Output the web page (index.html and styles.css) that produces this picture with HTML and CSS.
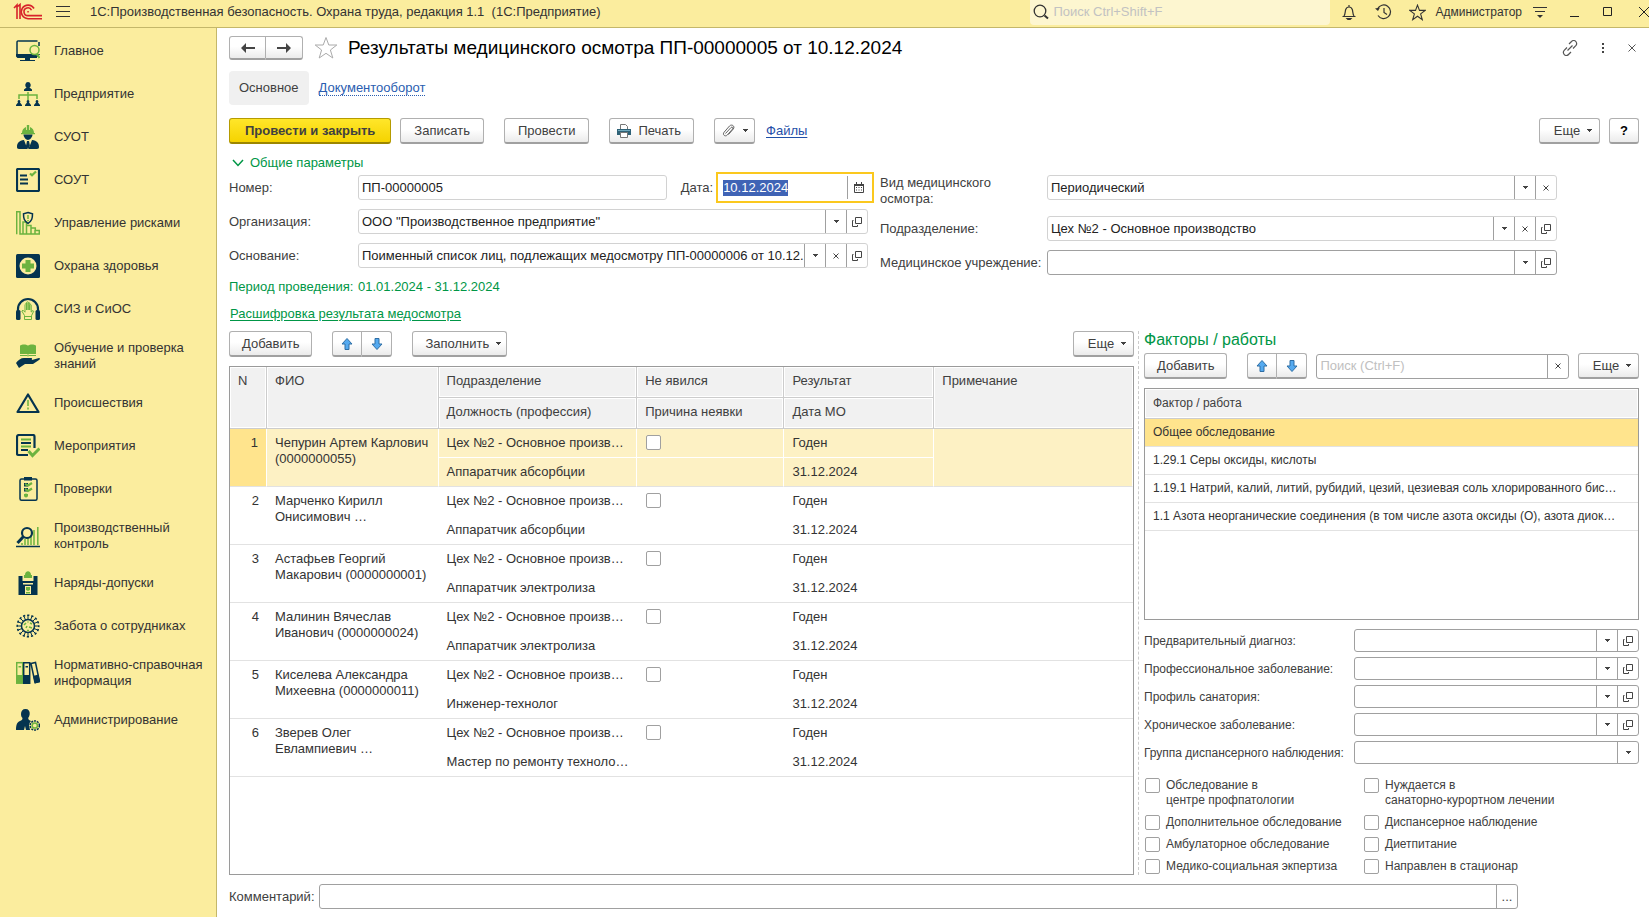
FILE: index.html
```html
<!DOCTYPE html>
<html lang="ru">
<head>
<meta charset="utf-8">
<title>Результаты медицинского осмотра</title>
<link rel="stylesheet" href="styles.css">
</head>
<body>
<svg class="sprite" aria-hidden="true">
  <symbol id="drop" viewBox="0 0 5 3"><path d="M0 0h5v1H4v1H3v1H2V2H1V1H0z" fill="currentColor"/></symbol>
  <symbol id="open" viewBox="0 0 10 10"><path d="M3.500.5h6v6h-6zM1.500 3.500h-1v6h5v-1.500" fill="none" stroke="currentColor"/></symbol>
  <symbol id="cross" viewBox="0 0 6 6"><path d="M.5.5l5 5M5.500.5l-5 5" fill="none" stroke="currentColor"/></symbol>
  <symbol id="up" viewBox="0 0 12 12"><path d="M6 .5L11 6H8v5.500H4V6H1z" fill="#55aaf0" stroke="#2f6ea5"/></symbol>
  <symbol id="down" viewBox="0 0 12 12"><path d="M6 11.500L1 6h3V.5h4V6h3z" fill="#55aaf0" stroke="#2f6ea5"/></symbol>
  <symbol id="star" viewBox="0 0 24 24"><path d="M12 1.500l2.800 7.500h8l-6.400 5 2.400 8L12 17.300 5.200 22l2.400-8-6.400-5h8z" fill="none" stroke="currentColor"/></symbol>
</svg>

<header class="titlebar">
  <svg class="logo" viewBox="0 0 30 18" fill="none" stroke="#d8232a" stroke-width="1.600"><path d="M1 5l3-3v14M3.500 4.500L7 1.500V16"/><path d="M21 5.500A6.800 6.800 0 1 0 15 15.700H29"/><path d="M18.500 7.200A3.900 3.900 0 1 0 15 12.600H29"/><path d="M15.800 8.700h-1.500"/></svg>
  <button class="bare" aria-label="Меню"><svg width="16" height="14" viewBox="0 0 16 14" stroke="#333"><path d="M1 1.500h14M1 6.500h14M1 11.500h14"/></svg></button>
  <span class="app-name">1С:Производственная безопасность. Охрана труда, редакция 1.1&nbsp; (1С:Предприятие)</span>
  <label class="global-search">
    <svg width="16" height="16" viewBox="0 0 16 16" fill="none" stroke="#333"><circle cx="7" cy="7" r="5.800" stroke-width="1.300"/><path d="M11.500 11.500l3.500 3" stroke-width="2"/></svg>
    <input type="text" placeholder="Поиск Ctrl+Shift+F" aria-label="Поиск">
  </label>
  <div class="title-tools">
    <button class="bare" aria-label="Уведомления"><svg width="16" height="16" viewBox="0 0 16 16" fill="none" stroke="#333" stroke-width="1.200"><path d="M1.500 12.500h13M3 12c1.500-2 1-4.500 1.700-6.500C5.300 3.700 6.500 3 8 3s2.700.7 3.300 2.500C12 7.500 11.500 10 13 12M8 3V1"/><path d="M6 14.500h4l-1 1H7z" fill="#333"/></svg></button>
    <button class="bare" aria-label="История"><svg width="17" height="16" viewBox="0 0 17 16" fill="none" stroke="#333" stroke-width="1.200"><path d="M2.500 5A6.800 6.800 0 1 1 3 11.500M9 4v4.500l3 2"/><path d="M0 4.500l3 2.500 2-3.500z" fill="#333" stroke="none"/></svg></button>
    <button class="bare" aria-label="Избранное"><svg width="17" height="17"><use href="#star" stroke-width="1.500"/></svg></button>
    <span class="user">Администратор</span>
    <button class="bare" aria-label="Настройки"><svg width="14" height="13" viewBox="0 0 14 13" stroke="#333"><path d="M0 1.500h14M2 5.500h10"/><path d="M4 9h6l-3 3z" fill="#333" stroke="none"/></svg></button>
    <button class="bare win" aria-label="Свернуть"><svg width="10" height="10" viewBox="0 0 10 10"><path d="M1 9.500h9" stroke="#222"/></svg></button>
    <button class="bare win" aria-label="Развернуть"><svg width="10" height="10" viewBox="0 0 10 10"><path d="M.5.5h8v8h-8z" stroke="#222" fill="none"/></svg></button>
    <button class="bare win" aria-label="Закрыть"><svg width="10" height="10" viewBox="0 0 10 10"><path d="M0 0l10 10M10 0L0 10" stroke="#222"/></svg></button>
  </div>
</header>

<div class="body">
<nav class="sidebar">
  <a href="#"><svg viewBox="0 0 24 24"><path class="sn" d="M3 2h18.500M23 3v4M23 15v1M1 16V3.500A1.500 1.500 0 0 1 3 2M1 17h22" /><path class="n" d="M0 15h17l4 2v2H1.500L0 17.500zM9 19h5v2h5v1H4v-1h5z"/><circle class="sg" cx="18.500" cy="11" r="4.500"/><path class="sg w2" d="M21 15l2.500 4"/></svg>Главное</a>
  <a href="#"><svg viewBox="0 0 24 24"><path class="n" d="M12 0a2.800 3 0 0 1 1.500 5.500L16 7.500V9H8V7.500l2.500-2A2.800 3 0 0 1 12 0z"/><path class="sg" d="M12 10v8M3 17v-4h18v4"/><path class="n" d="M3 18a1.500 1.500 0 0 1 1 2.500L6 23v1H0v-1l2-2.500A1.500 1.500 0 0 1 3 18zM12 18a1.500 1.500 0 0 1 1 2.500l2 2.500v1H9v-1l2-2.500A1.500 1.500 0 0 1 12 18zM21 18a1.500 1.500 0 0 1 1 2.500l2 2.500v1h-6v-1l2-2.500a1.500 1.500 0 0 1 1-2.500z"/></svg>Предприятие</a>
  <a href="#"><svg viewBox="0 0 24 24"><path class="g" d="M6 8c0-3 1.500-5 4-6V5h.8V0h2.400v5h.8V2c2.500 1 4 3 4 6h1v1.200H5V8z"/><path class="n" d="M7.500 9.500h9C16.500 12 14 15 12 15s-4.500-3-4.500-5.500zM8 15l3.500 9H3c-1.500 0-2-1-2-2 0-4 2-6.500 7-7zM16 15l-3.500 9H21c1.500 0 2-1 2-2 0-4-2-6.500-7-7zM11 16h2l1 5-2 3-2-3z"/></svg>СУОТ</a>
  <a href="#"><svg viewBox="0 0 24 24"><rect class="sn w2" x="1" y="1" width="22" height="22" rx="1"/><path class="sn w2" d="M4 7.500h7M4 11.500h8M4 15.500h8"/><path class="sg w2" d="M14 5.500l2 1.800L20 3.500"/></svg>СОУТ</a>
  <a href="#"><svg viewBox="0 0 24 24"><path class="sg" d="M.7 23.300V.7H4v22.600M4 5v18h19.300v-3.500h-4V17H15v-2.500h-4.500V11H7v12M10.500 14v9M15 17v6M19 19v4"/><path class="sn" fill="#fbed9e" d="M12 1.500l4.500 1.300c0 4.500-.5 7-4.500 9.700-4-2.700-4.500-5.200-4.500-9.700z"/><path class="sg" d="M12 4v4M12 9v1.200"/></svg>Управление рисками</a>
  <a href="#"><svg viewBox="0 0 24 24"><rect class="n" width="24" height="24" rx="1.500"/><circle cx="12" cy="12" r="8.500" fill="#fbed9e"/><path class="g" d="M9.500 6h5v3.500H18v5h-3.500V18h-5v-3.500H6v-5h3.500z"/></svg>Охрана здоровья</a>
  <a href="#"><svg viewBox="0 0 24 24"><path class="sn w2" d="M2 14v-2a10 10 0 0 1 20 0v2"/><rect class="n" y="13" width="4.500" height="10" rx="1.500"/><rect class="n" x="19.500" y="13" width="4.500" height="10" rx="1.500"/><path class="sg thin" d="M8.500 22.500v-4L5.800 14l1.200-.8 2 2V7.500q.8-1.500 1.500 0V13 5.500q.8-1.500 1.600 0V13 6q.8-1.500 1.600 0v7V8q.8-1.500 1.500 0v7l1.800-1.500.7.7-2.200 4.500v3.800zM8.500 19.500h7"/></svg>СИЗ и СиОС</a>
  <a href="#"><svg viewBox="0 0 24 24"><path class="g" d="M4 1.500C6 0 10 0 12 1.500 14 0 18 0 20 1.500V10h-7q-1 1-2 0H4z"/><path class="sg thin" d="M4 11.500h7q1 1 2 0h7"/><path class="n" d="M0 19c2-3 5-5 8-5h7c1.500 0 1.500 2 0 2h-4 5l7-2c1.500 0 1 1.500 0 2l-6 4H9l-6 4z"/></svg>Обучение и проверка<br>знаний</a>
  <a href="#"><svg viewBox="0 0 24 24"><path class="sn w2" stroke-linejoin="round" d="M12 3.500L22.500 21h-21z"/><path class="sg" d="M12 9v6M12 16.500v2"/></svg>Происшествия</a>
  <a href="#"><svg viewBox="0 0 24 24"><path class="sn w2" d="M12 21H2.500Q1 21 1 19.500V3Q1 1 3 1h14q1.500 0 1.500 1.500V14"/><path class="sg w2" d="M5 5.500h10M5 12.500h10"/><path class="sn w2" d="M5 9h10M5 16h7"/><path class="sg w3" d="M12.500 17l4 4.500 7-7"/></svg>Мероприятия</a>
  <a href="#"><svg viewBox="0 0 24 24"><rect class="sn" x="4" y="2" width="17" height="21.200" rx="1.500"/><path class="n" d="M8 0h8v3.500H8zM8 6h4v3.500H8zM8 11h4v3.500H8z"/><path class="sg w2" d="M9 7l3 1.500L16 6M9 12l3 2 4-2.500M8 18h4"/><circle class="g" cx="10" cy="18.500" r="2"/></svg>Проверки</a>
  <a href="#"><svg viewBox="0 0 24 24"><path class="sg" d="M6 19v2M9 15v6M12 14v7M15 11v10M18 6v15M21.800 3v18"/><path class="sn" d="M0 22.500h24"/><circle class="sn w2" cx="11" cy="9" r="5"/><path class="sn w3" d="M7.500 12.500L1.500 19"/></svg>Производственный<br>контроль</a>
  <a href="#"><svg viewBox="0 0 24 24"><path class="n" d="M2.500 5h4v5h11V5h4v19h-19z"/><path class="g" d="M8 7V4h1c0-5 6-5 6 0h1v3z"/><path d="M7 12h10v1.500H7zM9 15h6v8H9z" fill="#fbed9e"/><path class="g" d="M10 16h4v3l-2 1-2-1zM10 21h4v1.500h-4z"/></svg>Наряды-допуски</a>
  <a href="#"><svg viewBox="0 0 24 24"><circle class="sn" cx="12" cy="12" r="6.500"/><path class="sn thin" d="M12 5.500V1M12 18.500V23M5.500 12H1M18.500 12H23M7.400 7.400L4.200 4.200M16.600 16.600l3.200 3.200M7.400 16.600l-3.200 3.200M16.600 7.400l3.200-3.200M9.500 6L7.800 1.900M14.500 18l1.700 4.100M6 14.500l-4.100 1.700M18 9.500l4.100-1.700M6 9.500L1.900 7.800M18 14.500l4.100 1.700M9.500 18l-1.700 4.100M14.500 6l1.700-4.100"/><circle class="sn" cx="12" cy="12" r="10.800" stroke-width="2" stroke-dasharray="2.240 2" stroke-dashoffset="1.120"/><path class="sg" d="M8 11l2-2M10 14l1-2M14 9l2 1M13 13l3 1M11 16.500h2M12 7.500v1"/></svg>Забота о сотрудниках</a>
  <a href="#"><svg viewBox="0 0 24 24"><rect class="sg" x=".7" y="1.700" width="6" height="20.500"/><path class="g" d="M1 14h6v8H1zM2.500 5h2.600v1.500H2.500z"/><path class="sn" d="M7.700 1.700h6v20.500h-6zM15 2.500l4.500-1 4 19-4.500 1z"/><path class="n" d="M7.700 14h6v8h-6zM17 15l5.500-1.500L24 21l-5 1.500zM9.500 5h2.500v1.500H9.500z"/></svg>Нормативно-справочная<br>информация</a>
  <a href="#"><svg viewBox="0 0 24 24"><path class="n" d="M9.500 1c3 0 4.500 2 4.200 5-.2 2-1 3-1.500 4 0 2 1.500 2 2.800 3-1.500 1.500-2.500 4-1.500 6.500L14 22h-4l-1-4-1 4H0c0-5 1-8 4-9 1.500-.7 2.500-1 2.500-3C5.500 9 5 8 5 6c0-3 1.500-5 4.500-5z"/><circle class="sn" cx="18.800" cy="17.500" r="4.600" stroke-dasharray="2 .9"/><circle class="sg" cx="18.800" cy="17.500" r="2.600"/></svg>Администрирование</a>
</nav>

<main class="form">
  <div class="head">
    <div class="pair">
      <button class="btn" aria-label="Назад"><svg width="14" height="10" viewBox="0 0 14 10"><path d="M0 5l5-5v4h9v2H5v4z" fill="#444"/></svg></button>
      <button class="btn" aria-label="Вперед"><svg width="14" height="10" viewBox="0 0 14 10"><path d="M14 5L9 0v4H0v2h9v4z" fill="#444"/></svg></button>
    </div>
    <svg class="fav" width="24" height="24"><use href="#star"/></svg>
    <h1>Результаты медицинского осмотра ПП-00000005 от 10.12.2024</h1>
    <button class="bare" aria-label="Ссылка"><svg width="16" height="16" viewBox="0 0 16 16" fill="none" stroke="#555" stroke-width="1.200"><path d="M7 4l2.500-2.500a2.800 2.800 0 0 1 4.500.3c1 1.500.8 2.800-.2 3.900l-2.800 2.800M9 12l-2.500 2.500a2.800 2.800 0 0 1-4.500-.3c-1-1.500-.8-2.800.2-3.900L5 7.500M5.500 10.500l5-5"/></svg></button>
    <button class="bare" aria-label="Ещё"><svg width="2" height="12" viewBox="0 0 2 12" fill="#444"><path d="M0 1h2v2H0zM0 5h2v2H0zM0 9h2v2H0z"/></svg></button>
    <button class="bare" aria-label="Закрыть форму"><svg width="8" height="8" viewBox="0 0 8 8" stroke="#555"><path d="M.5.5l7 7M7.500.5l-7 7"/></svg></button>
  </div>

  <div class="tabs"><button class="tab">Основное</button><a class="doc-link" href="#">Документооборот</a></div>

  <div class="bar commands">
    <button class="btn primary">Провести и закрыть</button>
    <button class="btn">Записать</button>
    <button class="btn gap-l">Провести</button>
    <button class="btn gap-l icon-text"><svg width="14" height="14" viewBox="0 0 14 14"><path d="M3.500 5V.5h5l2 2V5" fill="#fff" stroke="#777"/><path d="M0 5h14v6H0z" fill="#2f6277"/><path d="M1 6h12v1H1z" fill="#6fa9bd"/><path d="M3.500 8.500h7v5h-7z" fill="#fff" stroke="#777"/></svg>Печать</button>
    <button class="btn gap-l icon-drop" aria-label="Вложения"><svg width="13" height="13" viewBox="0 0 13 13" fill="none" stroke="#666"><path d="M3.500 9.500l5.500-6c1.200-1.200 2.700.2 1.600 1.500l-5.300 6c-2 2.200-5.300-.3-3.200-2.800L7.500 2C9.500-.2 13.500 2 11.300 5L6.500 10.500"/></svg><svg class="i-drop"><use href="#drop"/></svg></button>
    <a class="files" href="#">Файлы</a>
    <button class="btn drop push">Еще<svg class="i-drop"><use href="#drop"/></svg></button>
    <button class="btn help">?</button>
  </div>

  <div class="group-title"><svg width="12" height="8" viewBox="0 0 12 8" fill="none" stroke="#009646" stroke-width="1.500"><path d="M1 1l5 5.500L11 1"/></svg>Общие параметры</div>

  <div class="params">
    <div class="col left">
      <label for="num">Номер:</label>
      <div class="num-date">
        <div class="field num"><input id="num" type="text" value="ПП-00000005"></div>
        <label for="date">Дата:</label>
        <div class="field date"><input id="date" type="text" value="10.12.2024"><button aria-label="Календарь"><svg width="10" height="11" viewBox="0 0 10 11"><path d="M.5 2.500h9v8h-9z" fill="#fff" stroke="#444"/><path d="M0 2h10v2H0zM2 0h1v2H2zM7 0h1v2H7zM2 5h1v1H2zM4.500 5h1v1h-1zM7 5h1v1H7zM2 7.500h1v1H2zM4.500 7.500h1v1h-1zM7 7.500h1v1H7z" fill="#444"/></svg></button></div>
      </div>
      <label for="org">Организация:</label>
      <div class="field"><input id="org" type="text" value='ООО "Производственное предприятие"'><button aria-label="Выбрать"><svg class="i-drop"><use href="#drop"/></svg></button><button aria-label="Открыть"><svg class="i-open"><use href="#open"/></svg></button></div>
      <label for="base">Основание:</label>
      <div class="field"><input id="base" type="text" value="Поименный список лиц, подлежащих медосмотру ПП-00000006 от 10.12."><button aria-label="Выбрать"><svg class="i-drop"><use href="#drop"/></svg></button><button aria-label="Очистить"><svg class="i-cross"><use href="#cross"/></svg></button><button aria-label="Открыть"><svg class="i-open"><use href="#open"/></svg></button></div>
    </div>
    <div class="col right">
      <label for="kind" class="two">Вид медицинского осмотра:</label>
      <div class="field"><select id="kind"><option>Периодический</option></select><span class="mark"><svg class="i-drop"><use href="#drop"/></svg></span><button aria-label="Очистить"><svg class="i-cross"><use href="#cross"/></svg></button></div>
      <label for="dep">Подразделение:</label>
      <div class="field"><input id="dep" type="text" value="Цех №2 - Основное производство"><button aria-label="Выбрать"><svg class="i-drop"><use href="#drop"/></svg></button><button aria-label="Очистить"><svg class="i-cross"><use href="#cross"/></svg></button><button aria-label="Открыть"><svg class="i-open"><use href="#open"/></svg></button></div>
      <label for="med">Медицинское учреждение:</label>
      <div class="field dark"><input id="med" type="text"><button aria-label="Выбрать"><svg class="i-drop"><use href="#drop"/></svg></button><button aria-label="Открыть"><svg class="i-open"><use href="#open"/></svg></button></div>
    </div>
  </div>

  <div class="period"><span>Период проведения:</span><span>01.01.2024 - 31.12.2024</span></div>
  <div class="decode"><a href="#">Расшифровка результата медосмотра</a></div>

  <div class="work">
    <section class="people">
      <div class="bar">
        <button class="btn">Добавить</button>
        <div class="pair arrows"><button class="btn" aria-label="Вверх"><svg width="12" height="12"><use href="#up"/></svg></button><button class="btn" aria-label="Вниз"><svg width="12" height="12"><use href="#down"/></svg></button></div>
        <button class="btn drop fill">Заполнить<svg class="i-drop"><use href="#drop"/></svg></button>
        <button class="btn drop push">Еще<svg class="i-drop"><use href="#drop"/></svg></button>
      </div>
      <div class="frame">
      <table class="grid main">
        <colgroup><col class="c-n"><col class="c-fio"><col class="c-dep"><col class="c-abs"><col class="c-res"><col></colgroup>
        <thead>
          <tr><th rowspan="2">N</th><th rowspan="2">ФИО</th><th>Подразделение</th><th>Не явился</th><th>Результат</th><th rowspan="2">Примечание</th></tr>
          <tr><th>Должность (профессия)</th><th>Причина неявки</th><th>Дата МО</th></tr>
        </thead>
        <tbody class="current">
          <tr><td rowspan="2" class="num-cell">1</td><td rowspan="2" class="fio">Чепурин Артем Карлович (0000000055)</td><td>Цех №2 - Основное произв…</td><td><input type="checkbox" aria-label="Не явился 1"></td><td>Годен</td><td rowspan="2"></td></tr>
          <tr><td>Аппаратчик абсорбции</td><td></td><td>31.12.2024</td></tr>
        </tbody>
        <tbody>
          <tr><td rowspan="2" class="num-cell">2</td><td rowspan="2" class="fio">Марченко Кирилл Онисимович …</td><td>Цех №2 - Основное произв…</td><td><input type="checkbox" aria-label="Не явился 2"></td><td>Годен</td><td rowspan="2"></td></tr>
          <tr><td>Аппаратчик абсорбции</td><td></td><td>31.12.2024</td></tr>
        </tbody>
        <tbody>
          <tr><td rowspan="2" class="num-cell">3</td><td rowspan="2" class="fio">Астафьев Георгий Макарович (0000000001)</td><td>Цех №2 - Основное произв…</td><td><input type="checkbox" aria-label="Не явился 3"></td><td>Годен</td><td rowspan="2"></td></tr>
          <tr><td>Аппаратчик электролиза</td><td></td><td>31.12.2024</td></tr>
        </tbody>
        <tbody>
          <tr><td rowspan="2" class="num-cell">4</td><td rowspan="2" class="fio">Малинин Вячеслав Иванович (0000000024)</td><td>Цех №2 - Основное произв…</td><td><input type="checkbox" aria-label="Не явился 4"></td><td>Годен</td><td rowspan="2"></td></tr>
          <tr><td>Аппаратчик электролиза</td><td></td><td>31.12.2024</td></tr>
        </tbody>
        <tbody>
          <tr><td rowspan="2" class="num-cell">5</td><td rowspan="2" class="fio">Киселева Александра Михеевна (0000000011)</td><td>Цех №2 - Основное произв…</td><td><input type="checkbox" aria-label="Не явился 5"></td><td>Годен</td><td rowspan="2"></td></tr>
          <tr><td>Инженер-технолог</td><td></td><td>31.12.2024</td></tr>
        </tbody>
        <tbody>
          <tr><td rowspan="2" class="num-cell">6</td><td rowspan="2" class="fio">Зверев Олег Евлампиевич …</td><td>Цех №2 - Основное произв…</td><td><input type="checkbox" aria-label="Не явился 6"></td><td>Годен</td><td rowspan="2"></td></tr>
          <tr><td>Мастер по ремонту техноло…</td><td></td><td>31.12.2024</td></tr>
        </tbody>
      </table>
      </div>
    </section>

    <section class="factors">
      <h2>Факторы / работы</h2>
      <div class="bar">
        <button class="btn">Добавить</button>
        <div class="pair arrows"><button class="btn" aria-label="Вверх"><svg width="12" height="12"><use href="#up"/></svg></button><button class="btn" aria-label="Вниз"><svg width="12" height="12"><use href="#down"/></svg></button></div>
        <div class="field dark search"><input type="text" placeholder="Поиск (Ctrl+F)" aria-label="Поиск (Ctrl+F)"><button aria-label="Очистить"><svg class="i-cross"><use href="#cross"/></svg></button></div>
        <button class="btn drop">Еще<svg class="i-drop"><use href="#drop"/></svg></button>
      </div>
      <div class="frame">
      <table class="grid list">
        <thead><tr><th>Фактор / работа</th></tr></thead>
        <tbody>
          <tr class="sel"><td>Общее обследование</td></tr>
          <tr><td>1.29.1 Серы оксиды, кислоты</td></tr>
          <tr><td>1.19.1 Натрий, калий, литий, рубидий, цезий, цезиевая соль хлорированного бис…</td></tr>
          <tr><td>1.1 Азота неорганические соединения (в том числе азота оксиды (О), азота диок…</td></tr>
        </tbody>
      </table>
      </div>
      <div class="diag">
        <label for="d1">Предварительный диагноз:</label>
        <div class="field dark"><input id="d1" type="text"><button aria-label="Выбрать"><svg class="i-drop"><use href="#drop"/></svg></button><button aria-label="Открыть"><svg class="i-open"><use href="#open"/></svg></button></div>
        <label for="d2">Профессиональное заболевание:</label>
        <div class="field dark"><input id="d2" type="text"><button aria-label="Выбрать"><svg class="i-drop"><use href="#drop"/></svg></button><button aria-label="Открыть"><svg class="i-open"><use href="#open"/></svg></button></div>
        <label for="d3">Профиль санатория:</label>
        <div class="field dark"><input id="d3" type="text"><button aria-label="Выбрать"><svg class="i-drop"><use href="#drop"/></svg></button><button aria-label="Открыть"><svg class="i-open"><use href="#open"/></svg></button></div>
        <label for="d4">Хроническое заболевание:</label>
        <div class="field dark"><input id="d4" type="text"><button aria-label="Выбрать"><svg class="i-drop"><use href="#drop"/></svg></button><button aria-label="Открыть"><svg class="i-open"><use href="#open"/></svg></button></div>
        <label for="d5">Группа диспансерного наблюдения:</label>
        <div class="field dark"><select id="d5"><option></option></select><span class="mark"><svg class="i-drop"><use href="#drop"/></svg></span></div>
      </div>
      <div class="checks">
        <label><input type="checkbox"><span>Обследование в<br>центре профпатологии</span></label>
        <label><input type="checkbox"><span>Нуждается в<br>санаторно-курортном лечении</span></label>
        <label><input type="checkbox"><span>Дополнительное обследование</span></label>
        <label><input type="checkbox"><span>Диспансерное наблюдение</span></label>
        <label><input type="checkbox"><span>Амбулаторное обследование</span></label>
        <label><input type="checkbox"><span>Диетпитание</span></label>
        <label><input type="checkbox"><span>Медико-социальная экпертиза</span></label>
        <label><input type="checkbox"><span>Направлен в стационар</span></label>
      </div>
    </section>
  </div>

  <div class="comment">
    <label for="comm">Комментарий:</label>
    <div class="field dark"><input id="comm" type="text"><button aria-label="Редактировать">...</button></div>
  </div>
</main>
</div>
<script src="main.js"></script>
</body>
</html>
```
FILE: main.js
```js
const date = document.getElementById('date');
date.focus();
date.select();
```
FILE: styles.css
```css
* { box-sizing: border-box; }
body {
  margin: 0;
  height: 100vh;
  display: flex;
  flex-direction: column;
  overflow: hidden;
  background: #fff;
  color: #404040;
  font: 13px/16px "Liberation Sans", Arial, sans-serif;
}
button, input, select { font: inherit; color: inherit; margin: 0; }
svg { display: block; flex: none; }
.sprite { position: absolute; width: 0; height: 0; }
.i-drop { width: 5px; height: 3px; }
.i-open { width: 10px; height: 10px; }
.i-cross { width: 6px; height: 6px; }
.bare { border: 0; background: none; padding: 0; display: flex; align-items: center; justify-content: center; }

/* title bar */
.titlebar {
  display: flex;
  align-items: center;
  height: 28px;
  flex: none;
  padding: 0 0 3px 13px;
  background: #fbed9e;
  border-bottom: 1px solid #c4b76a;
}
.logo { width: 30px; height: 18px; margin-right: 12px; }
.app-name { margin-left: 19px; color: #333; white-space: nowrap; }
.global-search {
  display: flex;
  align-items: center;
  gap: 4px;
  width: 300px;
  height: 25px;
  margin-left: auto;
  padding-left: 3px;
  background: #fdf6d0;
  border-radius: 0 0 4px 4px;
}
.global-search input { flex: 1; min-width: 0; border: 0; padding: 0; outline: 0; background: none; }
::placeholder { color: #c2c2c2; opacity: 1; }
.title-tools { display: flex; align-items: center; margin-left: 2px; color: #333; }
.title-tools .bare { width: 34px; }
.title-tools .user { font-size: 12px; margin: 0 1px; }
.title-tools .win:last-child { width: 24px; justify-content: flex-end; }

.body { flex: 1; min-height: 0; display: flex; }

/* sections panel */
.sidebar {
  width: 217px;
  flex: none;
  background: #fbed9e;
  border-right: 1px solid #c4b76a;
  padding-top: 1px;
}
.sidebar a {
  display: flex;
  align-items: center;
  gap: 14px;
  padding: 10px 0 9px 16px;
  color: #333;
  text-decoration: none;
  white-space: nowrap;
}
.sidebar svg { width: 24px; height: 24px; }
.n { fill: #05344f; }
.g { fill: #6cb33f; }
.sn, .sg { fill: none; stroke-width: 1.5; }
.sn { stroke: #05344f; }
.sg { stroke: #6cb33f; }
.w2 { stroke-width: 2.2; }
.w3 { stroke-width: 3; }
.thin { stroke-width: 1; }

/* form */
.form {
  flex: 1;
  min-width: 0;
  display: flex;
  flex-direction: column;
  padding: 8px 10px 8px 12px;
}
.btn {
  height: 26px;
  padding: 0 12px;
  display: flex;
  align-items: center;
  justify-content: center;
  border: 1px solid #b0b0b0;
  border-bottom: 2px solid #a0a0a0;
  border-radius: 3px;
  background: linear-gradient(#fff 45%, #ebebeb);
  white-space: nowrap;
}
.pair { display: flex; }
.pair .btn { width: 37px; padding: 0; }
.pair .btn:first-child { border-radius: 3px 0 0 3px; }
.pair .btn:last-child { border-radius: 0 3px 3px 0; border-left-width: 0; }
.pair.arrows .btn { width: 30px; }

.head { display: flex; align-items: center; height: 24px; padding-right: 3px; }
.head .btn { height: 24px; }
.fav { margin: 0 10px 0 11px; color: #aaa; }
h1 { flex: 1; margin: 0; font-size: 19px; line-height: 24px; font-weight: 400; color: #000; white-space: nowrap; }
.head .bare { margin-left: 24px; }

.tabs { display: flex; align-items: center; gap: 10px; margin-top: 11px; }
.tab { height: 34px; padding: 0 10px; border: 0; border-radius: 4px; background: #f0f0f0; }
.doc-link { color: #2a5db0; text-decoration: none; border-bottom: 1px dotted #2a5db0; line-height: 14px; }

.bar { display: flex; align-items: center; }
.commands { margin-top: 13px; }
.commands .btn { padding: 0 13px; }
.commands .primary {
  padding: 0 15px;
  margin-right: 9px;
  border-color: #b59b00;
  border-bottom-color: #9c8600;
  background: linear-gradient(#ffe62a, #f5d300);
  font-weight: 700;
}
.commands .gap-l { margin-left: 20px; }
.commands .icon-text { gap: 7px; padding: 0 12px 0 7px; }
.commands .icon-drop { gap: 8px; padding: 0 6px 0 7px; }
.files { margin-left: 11px; color: #1f4fa8; text-underline-offset: 2px; }
.btn.drop { gap: 7px; padding: 0 5px 0 12px; min-width: 61px; }
.push { margin-left: auto; }
.commands .help { margin-left: 9px; padding: 0; width: 30px; color: #000; font-weight: 700; }

.group-title { display: flex; align-items: center; gap: 6px; margin: 11px 0 4px; padding-left: 3px; color: #009646; }

/* fields */
.field {
  display: flex;
  height: 25px;
  min-width: 0;
  border: 1px solid #d2d2d2;
  border-radius: 3px;
  background: #fff;
}
.field input, .field select {
  flex: 1;
  min-width: 0;
  width: 0;
  border: 0;
  padding: 0 0 0 3px;
  outline: 0;
  background: none;
  appearance: none;
  color: #222;
}
.field button, .mark {
  width: 21px;
  flex: none;
  display: flex;
  align-items: center;
  justify-content: center;
  padding: 0;
  border: 0;
  border-left: 1px solid #a0a0a0;
  background: none;
  color: #444;
}
.mark { pointer-events: none; }
.field.dark { border-color: #a0a0a0; }
.field ::placeholder { color: #c0c0c0; }

.params {
  display: grid;
  grid-template-columns: minmax(0, 639fr) minmax(0, 677fr);
  gap: 12px;
  padding-right: 82px;
}
.col { display: grid; grid-template-columns: 129px minmax(0, 1fr); row-gap: 9px; align-items: center; align-content: start; }
.col.right { grid-template-columns: 167px minmax(0, 1fr); }
.two { padding-right: 20px; }
.col.right .two + .field { align-self: start; }
.num-date { display: flex; align-items: center; margin-right: -3px; }
.num { flex: 309; }
.num-date label { margin: 0 6px 0 14px; }
.date { flex: 151; border-color: transparent; border-radius: 0; outline: 2px solid #fbc81e; outline-offset: 1px; }
.date button { width: 23px; }
.date input::selection { background: #3f63b5; color: #fff; }

.period { display: grid; grid-template-columns: 129px 1fr; margin-top: 4px; color: #009646; }
.decode { margin: 11px 0 9px 1px; }
.decode a { color: #009646; text-underline-offset: 2px; }

/* work area */
.work {
  flex: 1;
  min-height: 0;
  display: grid;
  grid-template-columns: minmax(0, 909fr) minmax(0, 501fr);
}
.people, .factors { display: flex; flex-direction: column; min-height: 0; }
.people { padding-right: 4px; }
.people .bar { margin-bottom: 9px; }
.arrows { margin-left: 20px; }
.fill { margin-left: 20px; }
.factors { padding-left: 5px; border-left: 1px dashed #ccc; font-size: 12px; }
.factors .bar { font-size: 13px; }
.factors h2 { margin: 0; font-size: 16px; line-height: 18px; font-weight: 400; color: #009646; }
.factors .bar { margin: 4px 0 9px; }
.search { flex: 1; margin: 0 9px; }
.frame { flex: 1; min-height: 0; overflow: hidden; border: 1px solid #9a9a9a; }

.grid { width: 100%; table-layout: fixed; border-collapse: separate; border-spacing: 0; }
.grid th, .grid td {
  padding: 6px 4px 6px 8px;
  overflow: hidden;
  white-space: nowrap;
  text-align: left;
  vertical-align: top;
  font-weight: 400;
}
.grid th {
  background: #f1f1f1;
  border-right: 1px solid #ccc;
  border-bottom: 1px solid #ccc;
  box-shadow: inset 0 0 0 1px #fff;
}
.grid th:last-child[rowspan], .list th { border-right: 0; }
.grid td { color: #333; border-bottom: 1px solid #e2e2e2; }
.c-n { width: 37px; }
.c-fio { width: 19%; }
.c-dep { width: 22%; }
.c-abs { width: 16.3%; }
.c-res { width: 16.6%; }
.main th { height: 31px; }
.main td { height: 29px; }
.main tr:first-child td:not([rowspan]) { border-bottom-color: transparent; }
.main .num-cell { text-align: right; padding-right: 8px; }
.main .fio { white-space: normal; }
.main .current td { background: #fdf1c4; border-right: 1px solid #fff; }
.main .current tr:first-child td:not([rowspan]) { border-bottom-color: #fff; }
.main .current .num-cell { background: #ffe48d; }
.list th { height: 30px; }
.list td { height: 28px; padding: 5px 4px 5px 8px; }
.list .sel td { background: #ffe48d; }

input[type="checkbox"] {
  appearance: none;
  display: block;
  flex: none;
  width: 15px;
  height: 15px;
  border: 1px solid #a0a0a0;
  border-radius: 2px;
  background: #fff;
}
.main input[type="checkbox"] { margin-left: 1px; }

.diag { display: grid; grid-template-columns: 210px minmax(0, 1fr); row-gap: 5px; align-items: center; margin-top: 9px; white-space: nowrap; }
.diag .field { height: 23px; }
.checks {
  display: grid;
  grid-template-columns: 219px 1fr;
  row-gap: 7px;
  margin: 14px 0 1px 1px;
  line-height: 15px;
}
.checks label { display: flex; gap: 6px; white-space: nowrap; }

.comment { display: flex; align-items: center; gap: 4px; margin-top: 9px; padding-right: 121px; }
.comment .field { flex: 1; }
```
